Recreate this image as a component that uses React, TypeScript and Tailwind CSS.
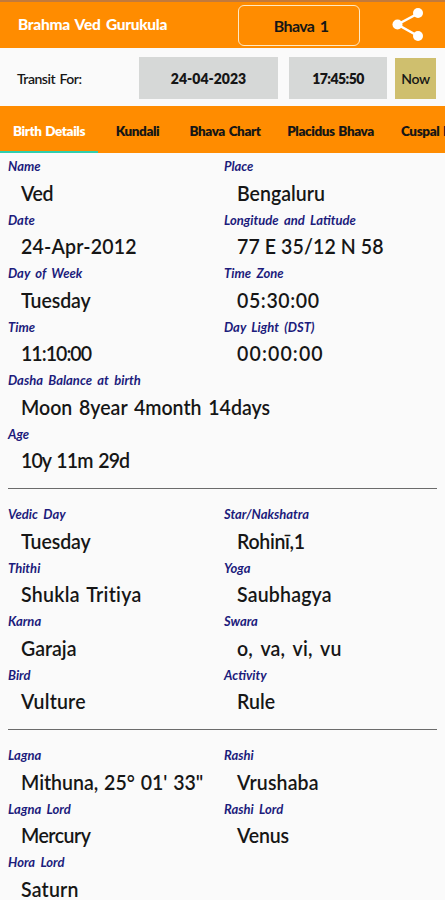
import { clsx } from 'clsx';

type Field = {
  label: string;
  value: string;
  wide?: boolean;
  valueClass?: string;
};

const BIRTH: Field[] = [
  { label: 'Name', value: 'Ved', valueClass: 'tracking-[-0.4px]' },
  { label: 'Place', value: 'Bengaluru' },
  { label: 'Date', value: '24-Apr-2012', valueClass: 'tracking-[0.2px]' },
  { label: 'Longitude and Latitude', value: '77 E 35/12 N 58', valueClass: 'tracking-[0.1px]' },
  { label: 'Day of Week', value: 'Tuesday', valueClass: 'tracking-[-0.1px]' },
  { label: 'Time Zone', value: '05:30:00', valueClass: 'tracking-[0.65px]' },
  { label: 'Time', value: '11:10:00', valueClass: 'tracking-[-1.05px]' },
  { label: 'Day Light (DST)', value: '00:00:00', valueClass: 'tracking-[1.2px]' },
  { label: 'Dasha Balance at birth', value: 'Moon 8year 4month 14days', wide: true, valueClass: '[word-spacing:2px]' },
  { label: 'Age', value: '10y 11m 29d', wide: true, valueClass: 'tracking-[-1px] [word-spacing:2px]' },
];

const PANCHANGA: Field[] = [
  { label: 'Vedic Day', value: 'Tuesday', valueClass: 'tracking-[-0.1px]' },
  { label: 'Star/Nakshatra', value: 'Rohinī,1', valueClass: 'tracking-[-0.35px]' },
  { label: 'Thithi', value: 'Shukla Tritiya', valueClass: 'tracking-[0.3px] [word-spacing:2px]' },
  { label: 'Yoga', value: 'Saubhagya', valueClass: 'tracking-[0.2px]' },
  { label: 'Karna', value: 'Garaja' },
  { label: 'Swara', value: 'o, va, vi, vu', valueClass: 'tracking-[0.2px] [word-spacing:3px]' },
  { label: 'Bird', value: 'Vulture', valueClass: 'tracking-[0.2px]' },
  { label: 'Activity', value: 'Rule' },
];

const LAGNA: Field[] = [
  { label: 'Lagna', value: 'Mithuna, 25° 01\' 33"', valueClass: '[word-spacing:1px]' },
  { label: 'Rashi', value: 'Vrushaba', valueClass: 'tracking-[0.15px]' },
  { label: 'Lagna Lord', value: 'Mercury', valueClass: 'tracking-[-0.55px]' },
  { label: 'Rashi Lord', value: 'Venus', valueClass: 'tracking-[-0.2px]' },
  { label: 'Hora Lord', value: 'Saturn', valueClass: 'tracking-[0.2px]' },
];

function FieldGrid({ fields }: { fields: Field[] }) {
  return (
    <div className="grid grid-cols-[216px_1fr] pl-2">
      {fields.map(f => (
        <div key={f.label} className={clsx('h-[53.5px] whitespace-nowrap', f.wide && 'col-span-2')}>
          <div className="text-[13px] leading-[26.5px] font-bold italic [word-spacing:2.5px] text-[#1c1c7c]">{f.label}</div>
          <div className={clsx('ml-[13px] w-fit origin-left scale-x-93 text-[21px] leading-[26.5px] font-semibold text-[#161616]', f.valueClass)}>{f.value}</div>
        </div>
      ))}
    </div>
  );
}

function Divider() {
  return (
    <div className="h-[27px] pt-[14px] px-2">
      <div className="h-px bg-[#6b6b6b]" />
    </div>
  );
}

export default function App() {
  return (
    <div className="w-[445px] h-[900px] overflow-hidden bg-[#fafafa] font-['Lato',sans-serif] text-[#161616]">
      {/* App bar */}
      <header className="flex items-center h-12 bg-[#ff8c00] border-t-2 border-[#c27a3c] pl-[18px] pr-[21px]">
        <h1 className="w-[220px] text-[15.5px] font-black tracking-[-0.3px] [word-spacing:2px] text-white whitespace-nowrap">Brahma Ved Gurukula</h1>
        <button className="w-[122px] h-[41px] pt-0.5 pl-1 rounded-md border-[1.5px] border-[#ffe9c4] text-[16px] font-bold tracking-[-0.6px] [word-spacing:2px]">Bhava 1</button>
        <svg viewBox="0 0 32 34" className="w-8 h-[34px] ml-auto" fill="#fff" stroke="#fff">
          <path d="M26 5.500L5.500 16.500l20.500 11.500" fill="none" strokeWidth="2.500" />
          <circle cx="26" cy="5" r="5" stroke="none" />
          <circle cx="5.500" cy="16.500" r="5" stroke="none" />
          <circle cx="26" cy="28" r="5" stroke="none" />
        </svg>
      </header>

      {/* Transit date and time */}
      <div className="flex items-center h-[58px] pt-0.5 pl-[17px] text-[14px] font-bold">
        <span className="w-[122px] font-semibold tracking-[-0.5px] [word-spacing:1.5px]">Transit For:</span>
        <button className="w-[139px] h-[42px] bg-[#d6d8d7] font-extrabold">24-04-2023</button>
        <button className="w-[98px] h-[42px] ml-[11px] bg-[#d6d8d7] font-extrabold tracking-[-0.6px]">17:45:50</button>
        <button className="w-[41px] h-[41px] ml-2 bg-[#cfbf6e] font-semibold tracking-[-0.3px]">Now</button>
      </div>

      {/* Tabs */}
      <nav className="flex h-[47px] bg-[#ff8c00] text-[13.5px] leading-[50px] font-extrabold tracking-[-0.4px] [word-spacing:1px] whitespace-nowrap">
        <a className="w-[98px] h-[47px] shrink-0 text-center text-white border-b-2 border-[#2fcfae]">Birth Details</a>
        <a className="w-[79px] shrink-0 text-center">Kundali</a>
        <a className="w-[96px] shrink-0 text-center">Bhava Chart</a>
        <a className="w-[115px] shrink-0 text-center">Placidus Bhava</a>
        <a className="shrink-0 pl-[13px]">Cuspal L</a>
      </nav>

      <FieldGrid fields={BIRTH} />
      <Divider />
      <FieldGrid fields={PANCHANGA} />
      <Divider />
      <FieldGrid fields={LAGNA} />
    </div>
  );
}
